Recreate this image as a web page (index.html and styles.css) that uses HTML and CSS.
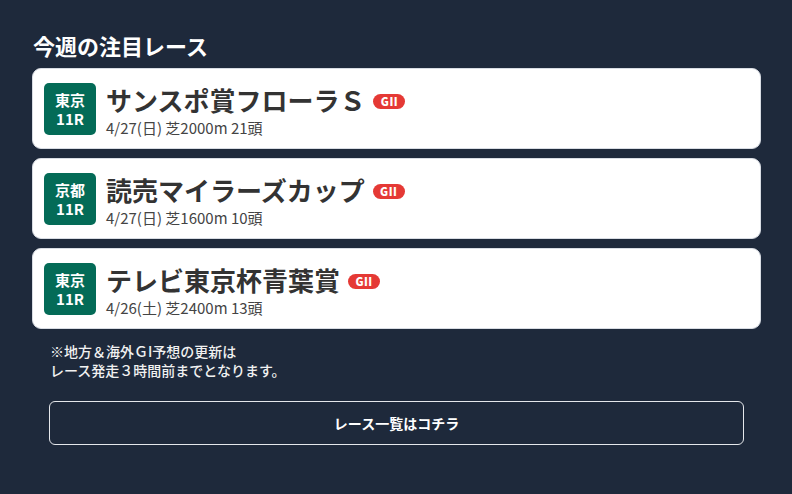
FILE: index.html
```html
<!DOCTYPE html>
<html lang="ja">
<head>
<meta charset="utf-8">
<link rel="stylesheet" href="styles.css">
</head>
<body>
<div class="wrap">
  <h2 class="heading">今週の注目レース</h2>
  <div class="list">
    <div class="card">
      <div class="venue"><span>東京</span><span>11R</span></div>
      <div class="info">
        <div class="name">サンスポ賞フローラＳ<span class="grade">GII</span></div>
        <div class="meta">4/27(日) 芝2000m 21頭</div>
      </div>
    </div>
    <div class="card">
      <div class="venue"><span>京都</span><span>11R</span></div>
      <div class="info">
        <div class="name">読売マイラーズカップ<span class="grade">GII</span></div>
        <div class="meta">4/27(日) 芝1600m 10頭</div>
      </div>
    </div>
    <div class="card">
      <div class="venue"><span>東京</span><span>11R</span></div>
      <div class="info">
        <div class="name">テレビ東京杯青葉賞<span class="grade">GII</span></div>
        <div class="meta">4/26(土) 芝2400m 13頭</div>
      </div>
    </div>
  </div>
  <p class="note">※地方＆海外ＧI予想の更新は<br>レース発走３時間前までとなります。</p>
  <div class="btn-row"><a class="btn">レース一覧はコチラ</a></div>
</div>
</body>
</html>
```
FILE: styles.css
```css
html, body {
  margin: 0;
  padding: 0;
  background: #1e293b;
  height: 100%;
}
body {
  font-family: "Noto Sans CJK JP", "Noto Sans", sans-serif;
}
.wrap {
  padding: 31px 31px 0 32px;
}
.heading {
  margin: 0 0 8px 1px;
  font-size: 22px;
  line-height: 29px;
  font-weight: 700;
  color: #ffffff;
}
.list {
  display: flex;
  flex-direction: column;
  gap: 9px;
}
.card {
  box-sizing: border-box;
  height: 81px;
  background: #ffffff;
  border: 1px solid #d8dce3;
  border-radius: 9px;
  display: flex;
  align-items: flex-start;
  gap: 10px;
  padding: 14px 11px;
}
.venue {
  width: 52px;
  height: 52px;
  flex: none;
  background: #046b57;
  border-radius: 5px;
  color: #ffffff;
  font-weight: 700;
  font-size: 15px;
  line-height: 19px;
  display: flex;
  flex-direction: column;
  align-items: center;
  justify-content: center;
}
.info {
  display: flex;
  flex-direction: column;
  padding-top: 2px;
}
.name {
  display: flex;
  align-items: center;
  font-size: 26px;
  line-height: 30px;
  font-weight: 700;
  color: #333333;
}
.grade {
  margin-left: 8px;
  width: 32px;
  height: 15px;
  border-radius: 8px;
  background: #e53935;
  color: #ffffff;
  font-size: 11px;
  line-height: 15px;
  font-weight: 900;
  text-align: center;
  letter-spacing: 0.5px;
  margin-top: 2px;
}
.meta {
  margin-top: 3px;
  font-size: 15px;
  line-height: 20px;
  color: #444444;
}
.note {
  margin: 13px 0 0 18px;
  font-size: 14px;
  line-height: 19px;
  font-weight: 500;
  color: #f1f1f1;
}
.btn-row {
  padding: 21px 17px 0 17px;
}
.btn {
  box-sizing: border-box;
  display: flex;
  align-items: center;
  justify-content: center;
  height: 44px;
  border: 1px solid #e5e7eb;
  border-radius: 6px;
  color: #ffffff;
  font-size: 14px;
  font-weight: 700;
}
```
